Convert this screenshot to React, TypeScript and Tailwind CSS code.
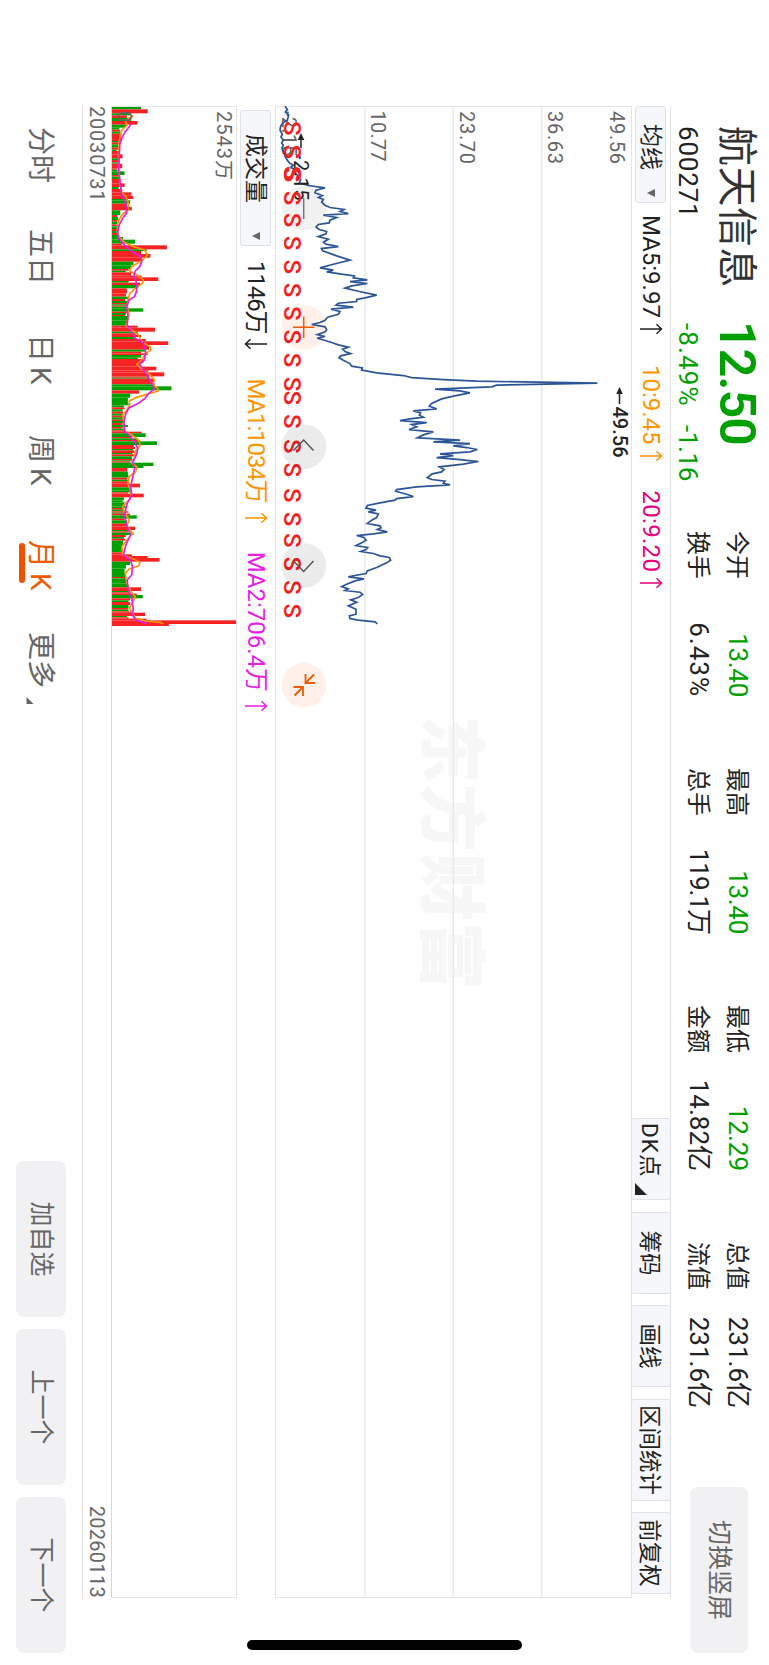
import clsx from "clsx"

const STATS = [
  [
    { label: "今开", value: "13.40", down: true, spacing: "tracking-[-0.3px]" },
    { label: "换手", value: "6.43%", spacing: "tracking-[1px]" },
  ],
  [
    { label: "最高", value: "13.40", down: true, spacing: "tracking-[-0.3px]" },
    { label: "总手", value: "119.1万", spacing: "tracking-[-1px]" },
  ],
  [
    { label: "最低", value: "12.29", down: true },
    { label: "金额", value: "14.82亿" },
  ],
  [
    { label: "总值", value: "231.6亿" },
    { label: "流值", value: "231.6亿" },
  ],
]

// [time, level] pairs, three units per pixel
const PRICE: number[][] = [
  [0, 165], [10, 172], [17, 166], [27, 176], [42, 172], [49, 160], [60, 152], [72, 150], [84, 157], [92, 153],
  [102, 160], [110, 155], [117, 160], [124, 156], [132, 158], [142, 163], [152, 166], [162, 172], [170, 178],
  [177, 190], [184, 182], [192, 200], [200, 195], [210, 205], [220, 212], [230, 208], [238, 235], [245, 285],
  [252, 258], [260, 255], [268, 277], [274, 265], [280, 280], [288, 275], [297, 285], [304, 300], [310, 342],
  [316, 330], [322, 355], [327, 280], [334, 320], [342, 300], [350, 297], [355, 265], [363, 258], [370, 268],
  [376, 290], [383, 288], [391, 265], [399, 295], [408, 280], [414, 288], [421, 325], [427, 274], [434, 278],
  [449, 320], [462, 360], [474, 310], [485, 270], [492, 310], [497, 290], [504, 335], [509, 373], [515, 370],
  [521, 412], [526, 360], [532, 412], [539, 365], [546, 345], [556, 388], [567, 440], [575, 405], [580, 380],
  [586, 380], [591, 325], [597, 318], [603, 370], [609, 303], [616, 330], [624, 325], [633, 293], [642, 285],
  [649, 270], [655, 245], [662, 285], [670, 290], [677, 286], [685, 262], [691, 285], [696, 262], [702, 283],
  [709, 305], [716, 325], [723, 355], [729, 338], [736, 345], [742, 362], [749, 332], [755, 327], [762, 340],
  [772, 360], [780, 365], [785, 397], [792, 395], [800, 440], [808, 520], [814, 545], [820, 640], [825, 740],
  [831, 1102], [837, 800], [842, 785], [849, 615], [854, 690], [860, 720], [870, 670], [878, 635], [892, 605],
  [900, 598], [908, 620], [914, 550], [920, 572], [927, 568], [933, 580], [938, 540], [943, 510], [949, 590],
  [955, 545], [962, 560], [970, 537], [977, 610], [986, 580], [995, 562], [1002, 690], [1007, 610], [1012, 720],
  [1019, 670], [1024, 710], [1030, 742], [1037, 720], [1043, 630], [1048, 670], [1054, 620], [1060, 690],
  [1066, 745], [1074, 700], [1082, 628], [1090, 642], [1097, 635], [1103, 607], [1114, 592], [1120, 605],
  [1125, 645], [1131, 640], [1136, 660], [1142, 560], [1150, 500], [1155, 497], [1164, 530], [1171, 550],
  [1177, 500], [1182, 495], [1190, 450], [1198, 412], [1206, 408], [1212, 438], [1217, 415], [1223, 445],
  [1234, 440], [1242, 425], [1252, 412], [1259, 450], [1265, 453], [1270, 442], [1277, 472], [1283, 430],
  [1288, 380], [1294, 402], [1302, 408], [1310, 395], [1318, 378], [1324, 413], [1330, 408], [1336, 392],
  [1342, 430], [1349, 450], [1354, 478], [1362, 482], [1370, 470], [1384, 440], [1394, 412], [1402, 408],
  [1408, 375], [1412, 355], [1418, 402], [1424, 375], [1434, 350], [1441, 335], [1448, 355], [1453, 345],
  [1458, 390], [1465, 398], [1474, 385], [1481, 362], [1488, 380], [1499, 355], [1509, 378], [1524, 378],
  [1529, 358], [1537, 360], [1542, 385], [1547, 435], [1553, 442],
]

// [from, height, up]; each bar runs until the next one starts
const VOLUME: number[][] = [
  [0, 88, 0], [7, 108, 1], [19, 58, 0], [25, 45, 1], [33, 58, 0], [42, 77, 1], [53, 42, 0], [62, 22, 0], [68, 25, 1],
  [74, 24, 0], [80, 28, 1], [102, 20, 0], [106, 22, 1], [112, 18, 0], [122, 19, 1], [128, 14, 0], [132, 20, 1],
  [142, 32, 1], [154, 20, 0], [159, 22, 1], [166, 18, 0], [170, 31, 1], [184, 17, 1], [188, 16, 0], [193, 38, 0],
  [204, 20, 1], [209, 24, 0], [216, 22, 1], [229, 38, 1], [240, 20, 0], [246, 30, 1], [256, 58, 1], [266, 64, 1],
  [276, 48, 0], [280, 55, 0], [290, 45, 1], [300, 60, 1], [310, 25, 0], [324, 16, 1], [330, 18, 0], [339, 15, 1],
  [344, 16, 0], [352, 14, 1], [358, 15, 0], [366, 16, 1], [372, 14, 0], [378, 16, 1], [384, 22, 0], [390, 33, 0],
  [398, 70, 0], [410, 30, 1], [415, 166, 1], [427, 105, 0], [432, 88, 1], [441, 116, 1], [452, 90, 1], [464, 65, 0],
  [475, 58, 0], [486, 50, 1], [491, 42, 0], [496, 58, 1], [506, 90, 1], [511, 140, 1], [522, 50, 0], [527, 85, 1],
  [534, 80, 0], [544, 45, 1], [560, 42, 1], [569, 52, 0], [576, 40, 1], [582, 50, 0], [588, 45, 1], [592, 48, 0],
  [596, 42, 1], [599, 44, 0], [604, 94, 0], [614, 45, 1], [618, 42, 0], [624, 40, 1], [627, 50, 0], [640, 47, 0],
  [656, 78, 1], [662, 130, 1], [674, 78, 0], [679, 72, 1], [684, 88, 1], [690, 70, 0], [696, 102, 1], [703, 170, 1],
  [714, 112, 1], [728, 100, 0], [734, 88, 1], [739, 108, 1], [744, 88, 0], [752, 78, 0], [756, 95, 1], [768, 85, 1],
  [779, 134, 1], [790, 110, 1], [796, 158, 1], [808, 112, 1], [812, 116, 0], [815, 128, 1], [832, 130, 0],
  [838, 180, 0], [850, 82, 1], [860, 55, 0], [872, 48, 0], [888, 50, 0], [895, 36, 0], [901, 38, 1], [907, 32, 0],
  [914, 34, 1], [920, 32, 0], [926, 36, 1], [931, 34, 0], [938, 36, 1], [942, 33, 0], [948, 32, 1], [954, 48, 0],
  [960, 32, 1], [965, 38, 0], [970, 40, 1], [974, 90, 1], [979, 102, 0], [990, 60, 1], [994, 78, 0], [999, 85, 1],
  [1003, 136, 0], [1014, 66, 1], [1020, 70, 1], [1026, 64, 0], [1030, 68, 1], [1038, 62, 0], [1042, 66, 1],
  [1048, 60, 0], [1056, 62, 1], [1060, 60, 0], [1063, 55, 1], [1067, 125, 0], [1077, 95, 0], [1083, 46, 1],
  [1094, 48, 0], [1104, 50, 0], [1112, 46, 1], [1118, 48, 0], [1123, 52, 1], [1130, 85, 1], [1141, 58, 0],
  [1150, 55, 0], [1156, 48, 1], [1160, 96, 1], [1171, 36, 0], [1180, 32, 0], [1186, 38, 0], [1198, 42, 0],
  [1203, 36, 1], [1208, 35, 0], [1213, 50, 1], [1217, 42, 0], [1220, 55, 1], [1225, 75, 0], [1235, 38, 1],
  [1240, 46, 0], [1250, 44, 1], [1259, 70, 1], [1269, 52, 0], [1273, 48, 1], [1277, 65, 0], [1284, 42, 1],
  [1290, 36, 0], [1295, 40, 1], [1301, 34, 0], [1314, 30, 0], [1326, 32, 0], [1336, 36, 1], [1342, 60, 1],
  [1347, 108, 1], [1353, 144, 1], [1364, 55, 0], [1374, 42, 0], [1385, 38, 0], [1398, 40, 0], [1410, 42, 1],
  [1414, 45, 0], [1430, 48, 0], [1441, 88, 1], [1452, 50, 0], [1456, 52, 1], [1460, 75, 1], [1464, 93, 0],
  [1474, 55, 1], [1480, 50, 0], [1485, 55, 1], [1494, 50, 0], [1503, 48, 1], [1508, 50, 0], [1513, 60, 1],
  [1517, 100, 1], [1527, 45, 0], [1531, 50, 1], [1535, 105, 1], [1540, 375, 1], [1551, 172, 1], [1557, 0, 1],
]

const VOLUME_MA1 =
  "26,85 34,70 44,60 54,66 69,50 84,45 104,42 144,40 174,40 204,42 234,45 256,50 269,62 289,70 309,68 324,50 339,40 364,36 389,40 404,55 419,85 429,118 444,128 459,112 479,80 491,72 504,95 519,115 529,112 544,90 559,74 579,68 599,66 624,72 654,62 666,75 684,100 694,105 706,112 719,135 729,138 739,122 756,112 772,95 784,108 799,130 819,148 832,142 844,158 852,160 862,125 872,92 882,72 894,74 909,65 924,52 954,58 972,58 984,80 999,100 1014,106 1034,90 1054,88 1069,80 1079,95 1094,92 1109,72 1129,68 1154,78 1174,76 1199,52 1219,60 1239,72 1256,65 1279,82 1294,70 1319,50 1344,52 1356,85 1366,104 1376,102 1386,72 1399,60 1429,65 1454,78 1469,90 1484,84 1504,72 1519,82 1534,92 1542,120 1546,165 1551,175"

const VOLUME_MA2 =
  "52,78 62,70 74,60 89,52 109,44 144,42 194,40 234,46 259,48 284,58 304,66 319,64 334,52 354,42 379,36 394,40 419,62 434,80 449,108 464,110 479,104 492,90 509,86 529,95 554,94 569,88 579,72 599,64 624,68 654,66 674,78 694,90 709,115 734,122 759,118 772,103 784,112 804,126 829,140 846,148 860,130 874,120 889,100 902,72 919,62 944,56 974,58 984,72 1004,88 1024,98 1044,94 1066,82 1084,88 1114,82 1139,76 1164,80 1189,66 1224,58 1254,64 1284,76 1314,62 1344,54 1359,76 1379,82 1404,80 1419,66 1444,68 1474,80 1504,84 1524,82 1539,92 1546,115 1551,128"

const SELL_MARKS = [
  22.3, 45.7, 67, 69, 92, 114, 137, 160.7, 184, 207.3, 230.7, 254, 278, 291.7, 315.3, 340.3, 363.7, 389.3, 413, 434.3,
  457.7, 481.3, 504.7,
]

const TABS = [
  { text: "分时", className: "w-[102px]" },
  { text: "五日", className: "w-[105px]" },
  { text: "日", k: true, className: "w-[101px]" },
  { text: "周", k: true, className: "w-[105px]" },
  { text: "月", k: true, active: true, className: "w-[92px]" },
]

const TOOLS = [
  { text: "筹码", className: "ml-[12px] w-[82px]" },
  { text: "画线", className: "ml-[11px] w-[82px]" },
  { text: "区间统计", className: "ml-[12px] w-[102px]" },
  { text: "前复权", className: "ml-[11px] w-[82px]" },
]

function TrendArrow({ down, className }: { down?: boolean; className?: string }) {
  return (
    <svg
      viewBox="0 0 12 24"
      className={clsx("h-6 w-3 shrink-0", down && "rotate-180", className)}
      fill="none"
      stroke="currentColor"
      strokeWidth="1.5"
    >
      <path d="M6 23V1.5M1.2 6.5L6 1.5L10.8 6.5" />
    </svg>
  )
}

function Caret() {
  return (
    <svg viewBox="0 0 8 8" className="h-2 w-2 shrink-0" fill="#666">
      <path d="M0 0H8L4 8Z" />
    </svg>
  )
}

function Header() {
  return (
    <header className="flex h-[98px] shrink-0 pl-[126px]">
      <div className="w-[405px] shrink-0">
        <div className="flex h-[65px] pt-[11px]">
          <h1 className="w-[195px] pt-[2px] text-[40px] leading-[40px] tracking-[0.5px] text-[#333]">航天信息</h1>
          <span className="text-[50px] leading-[42px] font-semibold tracking-[-0.9px] text-[#00a000]">12.50</span>
        </div>
        <div className="flex text-[26px] leading-8 text-[#222]">
          <span className="w-[197px] tracking-[0.8px]">600271</span>
          <span className="w-[102px] tracking-[1.1px] text-[#00a000]">-8.49%</span>
          <span className="tracking-[-0.4px] text-[#00a000]">-1.16</span>
        </div>
      </div>

      {/* Quote stats */}
      <div className="flex gap-[71px] pt-[12px]">
        {STATS.map((column, i) => (
          <div key={i} className="flex w-[166px] flex-col">
            {column.map((s) => (
              <div key={s.label} className="flex h-[39px] items-center justify-between text-[#222]">
                <span className="text-[24px]">{s.label}</span>
                <span className={clsx("text-[26px]", s.down && "text-[#00a000]", s.spacing)}>{s.value}</span>
              </div>
            ))}
          </div>
        ))}
      </div>

      <button className="mt-[21px] ml-[79px] h-[58px] w-[166px] rounded-lg bg-[#f1f1f3] text-[25px] text-[#666]">
        切换竖屏
      </button>
    </header>
  )
}

function AverageRow() {
  return (
    <div className="flex h-[40px] shrink-0 items-center border-y border-[#e4e4e4] text-[24px] text-[#222]">
      <div className="flex h-[31px] w-[97px] items-center justify-between rounded-[3px] border border-[#dfe2e8] bg-[#f6f7fa] pr-[5px] pl-[17px] text-[23px]">
        <span className="pt-[3px]">均线</span>
        <Caret />
      </div>
      <span className="ml-[12px]">MA5:9.97</span>
      <TrendArrow className="ml-[5px]" />
      <span className="ml-[30px] text-[#ff9500]">10:9.45</span>
      <TrendArrow className="ml-[5px] text-[#ff9500]" />
      <span className="ml-[29px] tracking-[0.3px] text-[#e6007e]">20:9.20</span>
      <TrendArrow className="ml-[5px] text-[#e6007e]" />

      <div className="ml-auto flex pr-[4px] text-[22.5px]">
        <div className="relative h-[40px] w-[82px] rounded-[3px] border border-[#dfe2e8] bg-[#f6f7fa] pl-[4px] leading-[41px] tracking-[1px]">
          DK点
          <svg viewBox="0 0 12 12" className="absolute right-[4px] bottom-[3px] h-3 w-3" fill="#222">
            <path d="M12 0V12H0Z" />
          </svg>
        </div>
        {TOOLS.map((t) => (
          <div
            key={t.text}
            className={clsx(
              "h-[40px] rounded-[3px] border border-[#dfe2e8] bg-[#f6f7fa] text-center leading-[41px]",
              t.className,
            )}
          >
            {t.text}
          </div>
        ))}
      </div>
    </div>
  )
}

function PriceChart() {
  return (
    <div className="relative h-[356px] shrink-0 border-x border-b border-[#e4e4e4]">
      <svg viewBox="0 0 1490 355" className="block h-[355px] w-full overflow-visible" fontSize="20">
        <g stroke="#e6e8f0" strokeWidth="1.4">
          <path d="M0 89.3H1490M0 266H1490" />
        </g>
        <text x="608" y="204.5" fontSize="68" fontWeight="900" fill="#f7f7f7" textLength="275">
          东方财富
        </text>
        <path d="M0 177.7H1490" stroke="#e6e8f0" strokeWidth="1.4" />

        <g fill="#666" letterSpacing="0.7">
          <text x="4" y="21.5">49.56</text>
          <text x="4" y="83">36.63</text>
          <text x="4" y="171.5">23.70</text>
          <text x="3.5" y="260" letterSpacing="0.2">10.77</text>
          <text x="4" y="349.5" letterSpacing="0.2">-2.15</text>
        </g>

        <circle cx="101.3" cy="327" r="22.3" fill="#000" fillOpacity="0.055" />
        <circle cx="220.3" cy="327" r="22.3" fill="#fff1ea" />

        <polyline
          points={PRICE.map(([t, p]) => `${t / 3 - 0.8},${(1203 - p) / 3}`).join(" ")}
          fill="none"
          stroke="#2b5597"
          strokeWidth="1.7"
        />

        {/* High and low labels */}
        <g fill="#222" stroke="#222" fontWeight="500">
          <path d="M282 11.5H297" strokeWidth="1.5" />
          <path d="M280 11.5L287 8.2V14.8Z" stroke="none" />
          <text x="299.5" y="18.5" stroke="none">49.56</text>
          <path d="M28 330H41" strokeWidth="1.5" />
          <path d="M26 330L33 326.7V333.3Z" stroke="none" />
          <text x="47" y="337" stroke="none" fontWeight="400" letterSpacing="0.5">-2.15</text>
        </g>

        <g fill="#f51f1f" fontSize="24" fontWeight="500" textAnchor="middle">
          {SELL_MARKS.map((x) => (
            <text key={x} x={x - 1} y="347.3">
              S
            </text>
          ))}
        </g>
        <g fill="#000" fillOpacity="0.08">
          <circle cx="339.6" cy="327" r="22.3" />
          <circle cx="458.6" cy="327" r="22.3" />
        </g>
        <circle cx="578" cy="327" r="22.3" fill="#fff1ea" />
        <g fill="none" strokeWidth="1.5">
          <path d="M91 327.3H112" stroke="#777" />
          <path d="M209.5 327.3H231M220.3 316.5V338" stroke="#f05a00" />
          <path d="M343.5 317.5L333 327.3L343.5 337.5M454 317.5L464.5 327.3L454 337.5" stroke="#555" />
          <path
            d="M567 325.5H576V316M567.5 317L576 325.5M589 328H580V337.5M588.5 336.5L580 328"
            stroke="#f05a00"
            strokeWidth="1.8"
          />
        </g>
      </svg>
    </div>
  )
}

function IndicatorRow() {
  return (
    <div className="flex h-[39px] shrink-0 items-center border-b border-[#e4e4e4] text-[24px] text-[#222]">
      <div className="ml-[4px] flex h-[31px] w-[136px] items-center justify-between rounded-[3px] border border-[#dfe2e8] bg-[#f6f7fa] pr-[5px] pl-[23px] text-[23px]">
        <span className="pt-[3px]">成交量</span>
        <Caret />
      </div>
      <span className="ml-[15px] tracking-[-1.1px]">1146万</span>
      <TrendArrow down className="ml-[5px]" />
      <span className="ml-[28px] tracking-[-1.1px] text-[#ff9500]">MA1:1034万</span>
      <TrendArrow className="ml-[9px] text-[#ff9500]" />
      <span className="ml-[28px] text-[#e61ee6]">MA2:706.4万</span>
      <TrendArrow className="ml-[8px] text-[#e61ee6]" />
    </div>
  )
}

function VolumeChart() {
  return (
    <div className="h-[125px] shrink-0 border-x border-b border-x-[#e4e4e4] border-b-[#d5d7dd]">
      <svg viewBox="0 0 4470 375" preserveAspectRatio="none" className="block h-[124px] w-full">
        {VOLUME.slice(0, -1).map(([from, height, up], i) => (
          <rect
            key={from}
            x={from}
            y={375 - height}
            width={VOLUME[i + 1][0] - from}
            height={height}
            fill={up ? "#f52323" : "#00a000"}
          />
        ))}
        <g transform="matrix(1 0 0 -1 0 395)" fill="none" strokeWidth="5" strokeLinejoin="round">
          <polyline points={VOLUME_MA1} stroke="#ff9500" />
          <polyline points={VOLUME_MA2} stroke="#e61ee6" />
        </g>
        <g fill="#666" fontSize="60" letterSpacing="3">
          <text x="12" y="58">2543万</text>
          <text x="12" y="361">0</text>
        </g>
      </svg>
    </div>
  )
}

function Footer() {
  return (
    <footer className="flex h-[82px] shrink-0 pl-[127px]">
      <nav className="flex pt-[22px] text-[28px] leading-[40px] text-[#666]">
        {TABS.map((tab) => (
          <div key={tab.text} className={clsx("shrink-0", tab.className)}>
            <div className={clsx("relative flex w-fit gap-[5px]", tab.active && "text-[#f05a00]")}>
              {tab.text}
              {tab.k && <span>K</span>}
              {tab.active && <span className="absolute top-[35px] left-[3px] h-[6px] w-[40px] rounded-full bg-[#f05000]" />}
            </div>
          </div>
        ))}
        <div className="flex items-start">
          更多
          <svg viewBox="0 0 8 8" className="mt-[26px] ml-[9px] h-2 w-[7px]" fill="#666">
            <path d="M8 0V8H0Z" />
          </svg>
        </div>
      </nav>
      <div className="mt-[16px] mr-[12px] ml-auto flex gap-[12px] text-[25px] text-[#666]">
        <button className="h-[50px] w-[156px] rounded-lg bg-[#f1f1f3]">加自选</button>
        <button className="h-[50px] w-[156px] rounded-lg bg-[#f1f1f3]">上一个</button>
        <button className="h-[50px] w-[156px] rounded-lg bg-[#f1f1f3]">下一个</button>
      </div>
    </footer>
  )
}

export default function App() {
  return (
    <div className="relative h-[1665px] w-[769px] overflow-hidden bg-white">
      {/* Landscape screen turned clockwise */}
      <div className="relative flex h-[769px] w-[1665px] origin-top-left translate-x-[769px] rotate-90 flex-col bg-white font-[Roboto,'Noto_Sans_CJK_SC',sans-serif]">
        <Header />
        <main className="ml-[106px] flex w-[1492px] shrink-0 flex-col">
          <AverageRow />
          <PriceChart />
          <IndicatorRow />
          <VolumeChart />
          <div className="flex h-[29px] items-center justify-between border-b border-[#e4e4e4] text-[20px] text-[#666]">
            <span className="tracking-[0.8px]">20030731</span>
            <span className="tracking-[0.3px]">20260113</span>
          </div>
        </main>
        <Footer />
        <div className="absolute top-[247px] right-[15px] h-[275px] w-[10px] rounded-full bg-black" />
      </div>
    </div>
  )
}
